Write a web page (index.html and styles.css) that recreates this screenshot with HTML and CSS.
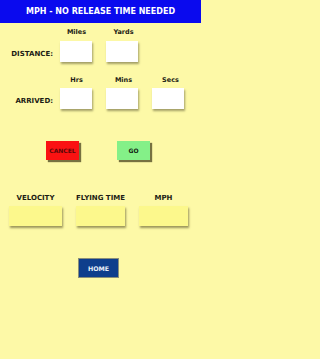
FILE: index.html
```html
<!DOCTYPE html>
<html>
<head>
<meta charset="utf-8">
<link rel="stylesheet" href="styles.css">
</head>
<body>
<div class="header">MPH - NO RELEASE TIME NEEDED</div>

<div class="col-labels first">
  <span class="col-label">Miles</span>
  <span class="col-label">Yards</span>
</div>
<div class="input-row">
  <span class="row-label">DISTANCE:</span>
  <div class="boxes">
    <div class="box"></div>
    <div class="box"></div>
  </div>
</div>

<div class="col-labels second">
  <span class="col-label">Hrs</span>
  <span class="col-label">Mins</span>
  <span class="col-label">Secs</span>
</div>
<div class="input-row">
  <span class="row-label">ARRIVED:</span>
  <div class="boxes">
    <div class="box"></div>
    <div class="box"></div>
    <div class="box"></div>
  </div>
</div>

<div class="actions">
  <div class="btn cancel">CANCEL</div>
  <div class="btn go">GO</div>
</div>

<div class="results">
  <span class="res-label">VELOCITY</span>
  <span class="res-label">FLYING TIME</span>
  <span class="res-label">MPH</span>
  <div class="res-box wide"></div>
  <div class="res-box"></div>
  <div class="res-box"></div>
</div>

<div class="home-row">
  <div class="home">HOME</div>
</div>
</body>
</html>
```

FILE: styles.css
```css
html, body {
  margin: 0;
  padding: 0;
}
body {
  background: #fdf9a7;
  font-family: "DejaVu Sans", Verdana, sans-serif;
  font-weight: bold;
  color: #1c1c14;
  width: 201px;
  height: 359px;
  overflow: hidden;
}
.header {
  height: 23px;
  background: #0a0aee;
  color: #ffffff;
  font-size: 8px;
  display: flex;
  align-items: center;
  justify-content: center;
  white-space: nowrap;
}
.col-labels {
  display: flex;
  gap: 14px;
  padding-left: 60px;
  height: 8px;
  line-height: 8px;
}
.col-labels.first { margin-top: 5px; }
.col-labels.second { margin-top: 14px; }
.col-label {
  width: 33px;
  text-align: center;
  font-size: 6.5px;
  white-space: nowrap;
}
.input-row {
  display: flex;
  margin-top: 5px;
}
.col-labels.second + .input-row { margin-top: 4px; }
.row-label {
  width: 53px;
  margin-right: 7px;
  text-align: right;
  font-size: 7px;
  line-height: 8px;
  align-self: center;
  padding-top: 4px;
  white-space: nowrap;
}
.boxes {
  display: flex;
  gap: 14px;
}
.box {
  width: 32px;
  height: 21px;
  background: #ffffff;
  box-shadow: 1px 2px 2px rgba(90, 85, 50, 0.55);
}
.actions {
  display: flex;
  gap: 38px;
  padding-left: 46px;
  margin-top: 32px;
}
.btn {
  width: 33px;
  height: 19px;
  display: flex;
  align-items: center;
  justify-content: center;
  font-size: 6px;
  box-shadow: 2px 2px 1px rgba(60, 55, 20, 0.7);
}
.cancel {
  background: #fa1212;
  color: #5a0808;
}
.go {
  background: #84f088;
  color: #102010;
}
.results {
  display: grid;
  grid-template-columns: 53px 49px 49px;
  column-gap: 14px;
  row-gap: 4px;
  padding-left: 9px;
  margin-top: 34px;
}
.res-label {
  display: flex;
  justify-content: center;
  font-size: 7px;
  line-height: 8px;
  height: 8px;
  white-space: nowrap;
}
.res-box {
  height: 20px;
  background: #fcf88c;
  box-shadow: 1px 2px 2px rgba(90, 85, 40, 0.6);
}
.home-row {
  padding-left: 78px;
  margin-top: 32px;
}
.home {
  width: 39px;
  height: 18px;
  background: #0e3e8c;
  border: 1px solid #8a8f7a;
  color: #e8eef8;
  font-size: 6.3px;
  display: flex;
  align-items: center;
  justify-content: center;
}
```
